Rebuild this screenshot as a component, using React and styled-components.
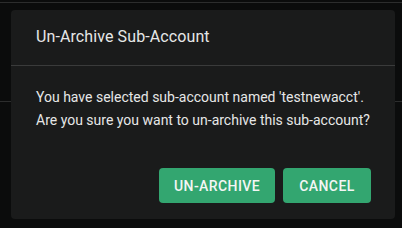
import React from "react";
import styled, { createGlobalStyle } from "styled-components";

const Global = createGlobalStyle`
  html, body { margin: 0; padding: 0; background: #0b0c0c; }
  body { font-family: Roboto, "Liberation Sans", sans-serif; }
`;

const Page = styled.div`
  position: relative;
  width: 402px;
  height: 228px;
  background: #0b0c0c;
  overflow: hidden;
`;

const BgLine = styled.div`
  position: absolute;
  left: 0;
  right: 0;
  top: ${(p) => p.$top}px;
  height: 1px;
  background: #2c2d2d;
`;

const Dialog = styled.div`
  position: absolute;
  left: 11px;
  top: 10px;
  width: 384px;
  height: 209px;
  background: #1a1b1b;
  border-radius: 4px;
  display: flex;
  flex-direction: column;
  box-sizing: border-box;
`;

const Header = styled.div`
  height: 56px;
  box-sizing: border-box;
  padding: 0 25px 2px;
  display: flex;
  align-items: center;
  border-bottom: 1px solid #3a3b3b;
  color: #e6e7e7;
  font-size: 16px;
  font-weight: 400;
  letter-spacing: 0.1px;
`;

const Body = styled.div`
  padding: 20px 25px 0;
  color: #e6e7e7;
  font-size: 14px;
  line-height: 23px;
`;

const Actions = styled.div`
  margin-top: auto;
  display: flex;
  justify-content: flex-end;
  gap: 8px;
  padding: 0 24px 16px;
`;

const Button = styled.button`
  height: 35px;
  min-width: ${(p) => p.$minWidth || 64}px;
  padding: 0 15px;
  border: none;
  border-radius: 4px;
  background: #33a670;
  color: #f4f6f5;
  font-family: Roboto, "Liberation Sans", sans-serif;
  font-size: 14px;
  font-weight: 500;
  letter-spacing: 0.4px;
  text-transform: uppercase;
  cursor: pointer;
`;

export default function App() {
  return (
    <>
      <Global />
      <Page>
        <BgLine $top={2} />
        <BgLine $top={101} />
        <Dialog>
          <Header>Un-Archive Sub-Account</Header>
          <Body>
            You have selected sub-account named 'testnewacct'.
            <br />
            Are you sure you want to un-archive this sub-account?
          </Body>
          <Actions>
            <Button>Un-Archive</Button>
            <Button $minWidth={88}>Cancel</Button>
          </Actions>
        </Dialog>
      </Page>
    </>
  );
}
